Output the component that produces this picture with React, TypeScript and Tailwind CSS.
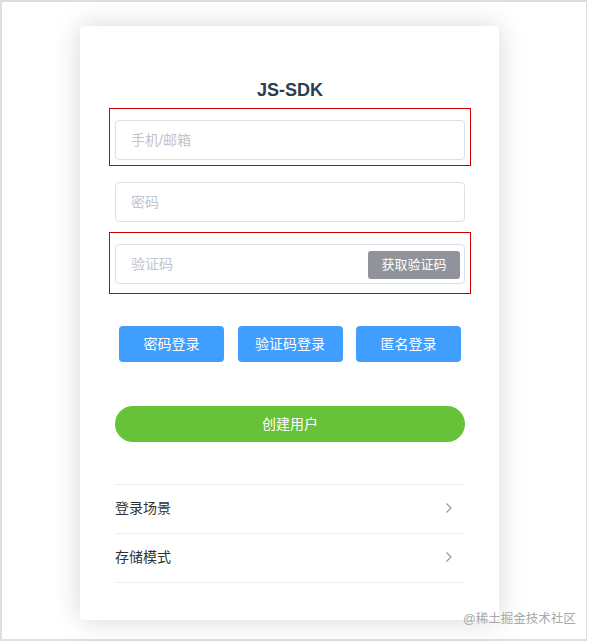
import React from 'react';

const cjk = { fontFamily: '"Liberation Sans", "Noto Sans CJK SC", sans-serif' };

const Chevron = () => (
  <svg width="8" height="12" viewBox="0 0 8 12" fill="none">
    <path d="M1.5 1.5 L6 6 L1.5 10.5" stroke="#909399" strokeWidth="1.1" />
  </svg>
);

const LoginButton = ({ label }: { label: string }) => (
  <button className="w-[105px] h-[36px] rounded-[4px] bg-[#409eff] text-white text-[14px]">
    {label}
  </button>
);

const MenuRow = ({ label }: { label: string }) => (
  <div className="h-[49px] flex items-center justify-between border-b border-[#ebeef5] pr-[12px] pb-[2px]">
    <span className="text-[14px] text-[#303133]">{label}</span>
    <Chevron />
  </div>
);

export default function App() {
  return (
    <div className="w-[591px] h-[642px] bg-white" style={cjk}>
      <div className="relative w-[587px] h-[641px] border-t-2 border-l-2 border-r border-b-2 border-[#dedede] bg-white">
        <div className="ml-[78px] mt-[24px] w-[419px] h-[594px] rounded-[4px] bg-white shadow-[0_0_28px_rgba(0,0,0,0.16)] pt-[52px] pl-[35px] pr-[34px]">
          <div className="h-[24px] leading-[24px] text-center text-[18px] font-bold text-[#2c3e50]">
            JS-SDK
          </div>

          {/* phone / email */}
          <div className="mt-[6px] mx-[-6px] border border-[#cc0000] px-[5px] pt-[11px] pb-[5px]">
            <div className="h-[40px] rounded-[4px] border border-[#dcdfe6] flex items-center pl-[15px] text-[14px] text-[#c0c4cc]">
              手机/邮箱
            </div>
          </div>

          {/* password */}
          <div className="mt-[16px] h-[40px] rounded-[4px] border border-[#dcdfe6] flex items-center pl-[15px] text-[14px] text-[#c0c4cc]">
            密码
          </div>

          {/* verify code */}
          <div className="mt-[10px] mx-[-6px] border border-[#cc0000] px-[5px] pt-[11px] pb-[9px]">
            <div className="h-[40px] rounded-[4px] border border-[#dcdfe6] flex items-center justify-between pl-[15px] pr-[4px] text-[14px] text-[#c0c4cc]">
              <span>验证码</span>
              <button className="w-[92px] h-[28px] mt-[2px] rounded-[3px] bg-[#909399] text-white text-[13px]">
                获取验证码
              </button>
            </div>
          </div>

          <div className="mt-[32px] flex justify-between px-[4px]">
            <LoginButton label="密码登录" />
            <LoginButton label="验证码登录" />
            <LoginButton label="匿名登录" />
          </div>

          <button className="mt-[44px] w-full h-[36px] rounded-full bg-[#67c23a] text-white text-[14px]">
            创建用户
          </button>

          <div className="mt-[42px] border-t border-[#ebeef5]">
            <MenuRow label="登录场景" />
            <MenuRow label="存储模式" />
          </div>
        </div>

        <div className="absolute left-[461px] top-[608px] text-[12.5px] text-[#a8a8a8]">
          @稀土掘金技术社区
        </div>
      </div>
    </div>
  );
}
